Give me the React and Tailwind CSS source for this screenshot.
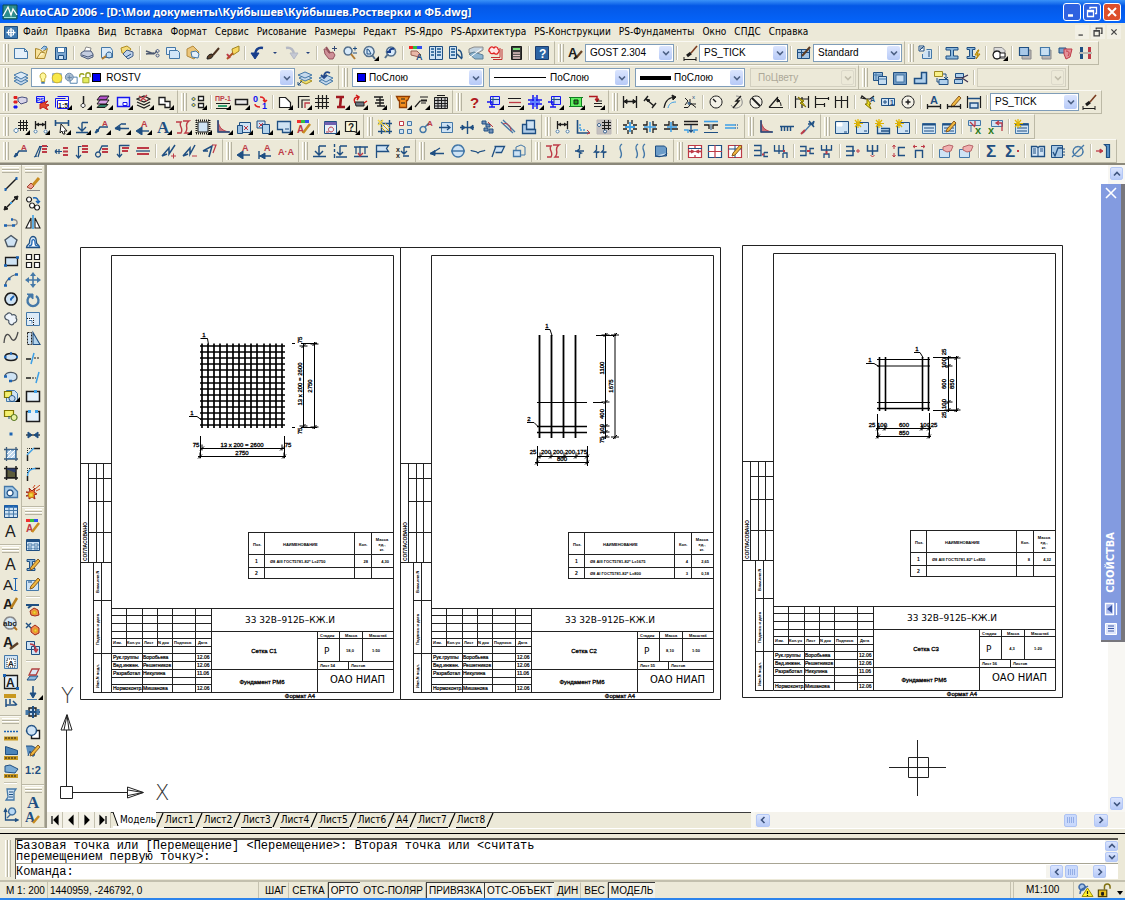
import { Fragment } from 'react'
import clsx from 'clsx'

const K = '#1c1c1c'
const N = '#1f4f82'
const S = '#4478a8'
const L = '#cfe3f4'
const R = '#bd3a46'
const Y = '#f3d545'
const G = '#8a8a8a'
const B = '#1414f0'
const E = '#3d9fe6'
const W = '#ffffff'

// text mark inside an icon
const T = (t, x, y, size, fill = K, bold = true, serif = false) => ({ t, x, y, size, fill, bold, serif })

const PENCIL = [['M6 10l7-8 2 2-7 8-3 1z', '#8a5a1c', '#f0b840']]
const STAR = [['M4 0v9M0 4.5h9M1 1l6 7M7 1L1 8', '#e0b400', 'none', 1.2]]
const TABLE = [['M1.5 4.5h13v10h-13z', S, L], ['M1.5 5.5h13', N, 'none', 2], ['M3 9h10M3 12h10', N, 'none', 1]]

// every mark is [path, stroke, fill, stroke width]
const ICONS = {
  new: [['M1.5 3.5h10l3 3v7h-13z', S, '#e4f0fb'], ['M11.5 3.5v3h3', S]],
  open: [['M2.5 13.5V3.5l4 1 3 2 5-3-3 10z', '#a8852c', '#f7e29a'], ['M4 13l4-6 4 1', '#a8852c', '#fff3c4'], ['M8 4l3-3 3 1-2 3', S, '#9cc4e8']],
  save: [['M2.5 2.5h11v12h-11z', N, '#7ba6d0'], ['M4.5 2.5h7v5h-7z', S, W], ['M5.5 10.5h5v4h-5z', N, L]],
  plot: [['M5 7L7 2l5 1-1 5', G, W], ['M2 8l3-2h7l2 3v3l-5 2-7-3z', '#4b5b7a', '#c4cde0'], ['M3 10l6 2 5-2', '#4b5b7a']],
  preview: [['M2.5 2.5h9l2 3v7h-11z', S, '#dcebf8'], ['M10 7a3 3 0 1 0 .1 0', N, '#bcdcf6'], ['M7 11l-4 3', '#b07a30', 'none', 2]],
  publish: [['M2 3l6-2 4 3-4 5-5-1z', '#b08c20', '#f4dc7a'], ['M4 9l4-4 6 2v4l-5 3z', '#3e5c88', '#bfd2ea'], ['M7 12l5-3', N]],
  cut: [['M1 6l8 3M1 9l8-1M9 9l3-3', '#4c5870', 'none', 1.4], ['M12.5 4.5a1.5 1.5 0 1 0 .1 0M12.5 9a1.5 1.5 0 1 0 .1 0', '#3c4f7c']],
  copy: [['M1.5 2.5h9v7h-9z', S, '#e4f0fb'], ['M4.5 5.5h8l2 2v6h-10z', S, '#d2e6f8']],
  paste: [['M2 4l6-3 6 6-5 7-7-3z', '#b48a3c', '#ecc67a'], ['M6 7l5-1 3 3-1 4-6-1z', S, '#e4f0fb']],
  brush: [['M2 14c0-3 2-5 5-5l1 1c0 3-3 4-6 4z', K, '#5c4028'], ['M8 10l6-7', '#4c3220', 'none', 2]],
  blockedit: [['M7 4l7-3v5l-6 4z', '#a08420', '#f8d860'], ['M2 14l6-6', '#b05420', 'none', 2], ['M2 9l3 4', R, 'none', 2]],
  undo: [['M13 3C8 2 5 5 5 10', '#183e8c', 'none', 2.4], ['M1 8l8 0-4 6z', '#183e8c', '#183e8c']],
  redo: [['M3 3c5-1 8 2 8 7', '#b4b8c4', 'none', 2.4], ['M7 8h8l-4 6z', '#b4b8c4', '#c4c8d4']],
  pan: [['M2 4l2 0 3 4 4-1 2 3-2 4-4 0-4-5z', '#94525c', '#cf9098'], ['M4 2l4 6', '#94525c', 'none', 2], ['M10 3.5h5M12.5 1v5', '#344a74']],
  zoomrt: [['M6 2a4 4 0 1 0 .1 0', '#54708c', '#d8eafa', 1.5], ['M9 9l4 5', '#b07a30', 'none', 2], ['M11 3.5h4M13 1.5v4M11 8h4', N]],
  zoomwin: [['M7 1.5a5 5 0 1 0 .1 0', '#54708c', '#d8eafa', 1.5], ['M5 4v5h4l-2-4z', N, L], ['M10 10l3 4', '#54708c', 'none', 2]],
  zoomprev: [['M9 2a4.5 4.5 0 1 0 .1 0', '#54708c', '#d8eafa', 1.5], ['M6 9l-3 4', '#54708c', 'none', 2], ['M12 4c-3-1-5 1-5 4M5 7h4', '#183e8c', 'none', 2]],
  props: [['M1 2.5h4', '#f02020', 'none', 3], ['M5 2.5h4', '#30c040', 'none', 3], ['M9 2.5h5', '#3050f0', 'none', 3], ['M3 6h6l4 4-2 2-4-1-4-1z', '#9a6050', '#e8b8a8'], T('A', 8, 15, 9, N)],
  center: [['M1.5 1.5h13v13h-13z', N, L], ['M7.5 2v12', N], ['M3 4h3M3 7h3M3 10h3M9 4h4M9 7h4M9 10h4', S, 'none', 2]],
  palettes: [['M1.5 1.5h7v12h-7z', N, L], ['M3 4h4M3 7h4M3 10h4', S, 'none', 2], ['M10 5c3 0 4 3 4 8M9 9l5 5', N, 'none', 1.5]],
  sheetset: [['M1 4l5-2h9v3l-5 3H1z', G, '#c4d4e0'], ['M1 9l5-2 9 3v4H7z', '#5c8098', '#8cb4d0'], ['M1 13l12-9', W]],
  markup: [['M2 3c1-2 3-1 4 0 1-2 4-1 4 1 2 1 1 3 0 4-1 2-3 1-4 0-1 1-4 1-4-1-2-1-1-3 0-4z', '#e02020', '#ffe4e4', 1.3], ['M3 12.5h9V3M5 14.5h9V4', '#c03030']],
  calc: [['M3.5 1.5h10v13h-10z', K, '#383838'], ['M5 4h7', '#78e078', 'none', 2], ['M5 8h7M5 10.5h7M5 13h7', '#e8c8c8', 'none', 1.4]],
  help: [['M1.5 1.5h13v13h-13z', '#1c3c6c', '#2c64a4'], T('?', 5, 13, 12, W)],
  textstyle: [T('A', 0, 12, 13), ['M8 13l6-7', '#6a4424', 'none', 2.2], ['M6 14l3-3', K, 'none', 2]],
  dimstyle: [['M2 14.5h12M2 12v4M14 12v4', K], ['M5 11l4-3', K, 'none', 3], ['M9 8l6-7', '#7a3c20', 'none', 1.6]],
  tblstyle: [['M1.5 4.5h12v9h-12z', N, '#a4c4e4'], ['M1.5 7.5h12M5.5 4.5v9', N], ['M6 11l8-9', '#5c3c24', 'none', 2]],
  cleanup: [['M1 1h5v5h-5z', N, W], ['M2 3h3M2 5l4-4', N], ['M8.5 4.5h5v9h-9V9', S, L], ['M10 7h2M10 9h2M10 11h2', N]],
  ibeam: [['M2 2.5h12v2.5H9.5v6H14v3H2v-3h4.5v-6H2z', N, '#8cb8dc']],
  ibeam2: [['M2 2.5h8v2H7.5v7H10v2H2v-2h2.5v-7H2z', N, '#8cb8dc'], ['M13 5l-3 5h3l-2 4 4-5h-3l2-4z', '#b08000', Y]],
  regen: [['M3 2.5h8l3 3v8H3z', G, '#dcdcdc'], ['M6 6a4 4 0 1 0 .1 0', K, W, 1.3], ['M9 8h5v4H9z', K, W]],
  front: [['M5 5h9v9H5z', G, '#b8b4b4', 1], ['M2.5 2.5h9v8h-9z', N, '#a8c8e8', 1.2]],
  back: [['M5 5h9v9H5z', G, '#b8b4b4', 1], ['M3.5 2.5h9v8h-9z', S, '#c8dff2', 1.2]],
  above: [['M1 3h7v5H1z', N, '#7ca4cc'], ['M6 4h8l-2 8-4 2-2-5z', R, '#e49098'], ['M8 6c3 0 4 2 2 5', R]],
  under: [['M3.5 2v5M3.5 9v5', N, 'none', 3], ['M11.5 2v5M11.5 9v5', R, 'none', 3], ['M1 8h13', G]],

  layers: [['M1 11l7-3 7 3-7 4z', S, '#c4d8ec'], ['M1 8l7-3 7 3-7 4z', S, '#c4d8ec'], ['M1 5l7-3 7 3-7 4z', S, '#dceaf6']],
  layercur: [['M3 11l6-3 6 3-6 3z', '#a89020', '#f0e070'], ['M2 8l6-3 7 3-7 3z', S, '#c4d8ec'], ['M1 5l7-3 7 3-7 3z', S, '#c4d8ec'], ['M1 15l4-4M1 12v3h3', N]],
  layerprev: [['M1 11l7-3 7 3-7 4z', S, '#c4d8ec'], ['M1 8l7-3 7 3-7 4z', S, '#c4d8ec'], ['M12 3c-4-2-6 0-6 4M3 5l3 3 3-3', '#23488a', 'none', 1.8]],
  vpj1: [['M1.5 2.5h9v8h-9z', N, '#9cc0e0'], ['M1.5 5h9M4 2.5v8', S], ['M6.5 6.5h8v8h-8z', N, '#c4dcf0'], ['M6.5 9h8', S]],
  vpj2: [['M1.5 2.5h13v12h-13z', N, '#7098c0'], ['M4 5h8v7H4z', S, '#c8def2']],
  vpj3: [['M8.5 2.5h5v11h-12v-5h7z', N, '#b0d0ec', 1.5]],
  vpj4: [['M1.5 1.5h8v5h-8z', '#9c8820', '#f8f088'], ['M6 9.5h9v5H6z', N, '#b0d0ec'], ['M10 4h3v4M11 7l2 2 2-2M4 8v4h2', N]],
  vpj5: [['M2.5 3.5h8v4h-8zM1.5 9.5h8v4h-8z', N, '#b0d0ec'], ['M9 8l6-3M9 8l6 4M2 8h8', '#3c3050', 'none', 1.2]],

  psprops: [['M1 2.5h3v2H1z', '#e02020', '#e02020'], ['M1 7h3v2H1z', '#e02020', '#e02020'], ['M1 12h3v2H1z', B, B], ['M5 4l4-1 5 1v4l-6 2-3-3z', '#4a5080', '#d8d4e8']],
  pswand: [['M2.5 2.5h8v6h-8z', B, '#d0d0f8'], T('PS', 2, 8, 6, B), ['M6 10l8-3-3 3 4 1-3 2 2 3-5-3-3 2z', '#c02020', '#e04830']],
  scale15: [['M1.5 4.5v9M1.5 4.5h10M3.5 2.5h11v4', B], ['M3.5 6.5h11v8h-11z', B, W], T('1:5', 4, 14, 7, K)],
  plumb: [['M8.5 2v8', K, 'none', 1.5], ['M8 9.5a2 2 0 1 0 .1 0', K, W]],
  layersp: [['M2 6l3-4h9l-3 4z', K, '#b050c8'], ['M2 10l3-4h9l-3 4z', K, '#d8a0e8'], ['M2 13.5l3-3h8l-3 3z', K, '#308068']],
  rectb: [['M1.5 3.5h12v9h-12z', B, '#e8ecff', 1.4], ['M7 8.5h4v3H7z', B, W]],
  layersx: [['M1 5l7-3 6 3-6 3zM1 8l7 3 6-3M1 11l7 3 6-3', K, 'none', 1.2], ['M3 2l8 5M11 1L4 7', R, 'none', 1.2]],
  step: [['M2 3.5h6v4h5v6H8v-3H2z', K, W, 1.3]],
  nodes: [['M3.5 3.5a1.5 1.5 0 1 0 .1 0M3.5 9.5a1.5 1.5 0 1 0 .1 0', N, Y], ['M8.5 2.5h5v4h-5zM8.5 9.5h5v4h-5z', K, W, 1.3]],
  pr1: [T('ПР-1', 0, 7, 7, R), ['M1 9.5h14M1 14.5h14', K], ['M3 12h9', '#30a070', 'none', 2]],
  beam: [['M1.5 5.5h12v5h-12z', K, '#e8e8e8', 1.5]],
  swap: [T('0', 1, 8, 9, B), T('1', 10, 15, 9, B), ['M8 3c4 0 5 2 5 5M11 6l2 2 2-2M8 13c-4 0-5-2-5-3', '#e02020', 'none', 1.4]],
  shape: [['M2.5 3.5h6l5 5v5h-11z', K, W, 1.2]],
  corner: [['M2.5 14V2.5h11M6 14V6h8', K, 'none', 1.2], ['M9 14V9h5', R, 'none', 1.3]],
  grid: [['M1 4.5h14M1 8.5h14M1 12.5h14M4.5 1v14M8.5 1v14M12.5 1v14', K, 'none', 1.2]],
  isec: [['M3 3h8M4 13h8M8 3L7 13', '#a01820', 'none', 2.6]],
  teapot: [['M3 8h9v4H4z', K, '#6c7480'], ['M3 9c-2-4 0-6 3-6M4 1L7 3 5 6M12 9l3-2', '#d01c1c', 'none', 1.5]],
  ladder: [['M3 3h9M5 6h8M4 9h9M6 12h8M9 3v9', K, 'none', 1.3]],
  cup: [['M1.5 2.5h13l-2 4h-1v7h-7v-7h-1z', '#903c00', '#f49020', 1.3], ['M6 5h4M6 9h4', K]],
  listl: [['M1 13l5-6h7M6 3h8M7 6h6M7 9h5', K, 'none', 1.2]],
  tbl: [['M1.5 3.5h13v11h-13z', K, '#c8c8c8'], ['M1 6.5h14M1 9.5h14M1 12h14M5 4v11M8.5 4v11M12 4v11M4 1.5h8', K]],
  ques: [T('?', 4, 14, 15, '#b01820')],
  dimwin: [['M4.5 2.5h9v8h-9z', B, '#d0dcf8'], ['M7 3v7M4.5 5.5h9', N], ['M1 8h5v5M3 13h6', B, 'none', 1.3]],
  lines: [['M1 4.5h13M1 12.5h13', K, 'none', 1.2], ['M2 8.5h12', R, 'none', 1.3]],
  bplus: [['M1 6h14M1 10h14M6 1v14M10 1v14', B, 'none', 1.5], ['M3 8h10M8 3v10', '#6080ff', 'none', 2]],
  green: [['M2.5 3.5h11v9h-11z', '#108020', '#60f060'], ['M1 3.5h14M1 12.5h14', '#108020'], ['M6 6h4v4H6z', K, '#18a018']],
  redlist: [['M1 2.5h8v4', '#b01820', 'none', 1.5], ['M7 5l2 3 2-3z', '#b01820', '#b01820'], ['M6 9.5h8M6 12.5h8M9 7h5', K]],
  dlin: [['M1.5 2v12M14.5 2v12M1.5 7.5h13', K, 'none', 1.3], ['M5 5.5l-3 2 3 2zM11 5.5l3 2-3 2z', K, K]],
  dalign: [['M4 5l8 7M2 7l4-5M10 14l4-5', K, 'none', 1.4], ['M4 5l4 1-2 2z', K, K]],
  darc: [['M2 14C3 7 7 3 14 3', K, 'none', 1.2], ['M6 14c1-4 3-6 8-6', E], ['M10 1l4 2-3 3z', K, K]],
  dord: [T('x', 10, 5, 6, N, false), ['M2 13.5h4l3-4 5 4M8 5v5h6M3 4l3 3-3 4', K], ['M7 8.5a1 1 0 1 0 .1 0', N]],
  drad: [['M8 2a6 6 0 1 0 .1 0', K, '#f4f2e8'], ['M8 8L5 5', K, 'none', 1.4]],
  djog: [['M8 2a6 6 0 1 1-5 9', G], ['M13 2L8 7h3l-6 7', K, 'none', 1.4]],
  ddia: [['M8 2a6 6 0 1 0 .1 0', K, '#f4f2e8'], ['M4 4l8 8', K, 'none', 1.8]],
  dang: [['M1 13.5h14M1 13.5L10 3', K, 'none', 1.2], ['M9 6c3 1 4 3 4 6', K], ['M9 4l3 3-3 1z', K, K]],
  dquick: [['M1.5 2v12M14.5 2v12M8 3v11M1.5 5h13', K, 'none', 1.2], ['M4 3l6 4-2 1 4 5-6-4 2-1z', '#807000', '#f0e020']],
  dbase: [['M1.5 2v12M1.5 4.5h13M1.5 10.5h9M14.5 3v3M10.5 9v4', K, 'none', 1.2]],
  dcont: [['M1.5 2v12M7.5 2v12M13.5 2v12M1.5 6.5h12', K, 'none', 1.2]],
  dlead: [['M1 4l5 1-4-3zM5 5h5l4-3', K, 'none', 1.2], T('A', 10, 8, 7, N), ['M7 5l4 5-2 0 2 5-6-5 2 0z', '#807000', '#f0e020']],
  tol: [['M1.5 4.5h13v7h-13z', N, L], ['M8.5 4v8M3 8h4M5 6v4', N], T('1', 10, 11, 7, N)],
  cmark: [['M8 2a6 6 0 1 0 .1 0', K, '#f4f2e8'], ['M5.5 8h5M8 5.5v5', K, 'none', 1.4]],
  dimed: [T('A', 4, 10, 11, N), ['M1.5 10v5M14.5 10v5M1.5 12.5h13', K, 'none', 1.3]],
  dimted: [...PENCIL, ['M1.5 10v5M14.5 10v5M1.5 12.5h13', K, 'none', 1.3]],
  dimup: [['M1.5 2v12M14.5 2v12', K, 'none', 1.2], ['M2 4.5h12M4 9h8v5H4z', N, L, 1.4]],

  gridc: [['M5 3.5h10M5 6.5h10M5 9.5h10M7.5 1v11M10.5 1v11M13.5 1v11', K], ['M3 9.5a2 2 0 1 0 .1 0', S, W]],
  dimc: [['M2.5 2v8M12.5 2v8M3 5.5h9', K, 'none', 1.3], ['M3 5.5l3-2v4zM12 5.5l-3-2v4z', K, K, 0], ['M2.5 11a1.5 1.5 0 1 0 .1 0M12.5 11a1.5 1.5 0 1 0 .1 0', S, W]],
  dimcur: [['M1.5 1v6M14.5 1v6M1.5 4h13', N, 'none', 1.6], ['M7 5l6 7-3 0 1 3-2 0-1-3-2 2z', K, W]],
  level: [['M8 3.5h6M8 3.5v8M4 8l4 4 4-4M2 13.5h12', N, 'none', 1.4]],
  leada: [['M2 14l4-6h8', N, 'none', 1.4], ['M1 14l2-4 2 2z', N, N], T('A', 8, 7, 8, R)],
  leadl: [['M1 9.5h14M1 9.5l7-5M8 5l4 0', N, 'none', 1.4], ['M1 9.5l5-2v4z', N, N]],
  leadb: [['M2 12h12', N, 'none', 1.4], ['M1 12l6-4v8z', N, N], T('A', 6, 8, 9, R)],
  biga: [T('A', 2, 14, 17, N, true, true)],
  rbreak: [['M1 3h5c-3 4 3 6 0 11H2M8 2h6c-6 4 1 7-4 12h4', R, 'none', 1.4]],
  hsq: [['M3 3h10v10H3z', K, L, 1], ['M1.5 1v14M14.5 1v14M1 1.5h14M1 14.5h14', K, 'none', 2, '1 1']],
  rtri: [['M3 2v11h11C8 12 4 9 3 2z', R, '#c87078'], ['M3 1v12h12', N, 'none', 1.5]],
  win1: [['M3.5 3.5h11v10h-11z', N, L], ['M1.5 6.5h5v8h-5z', N, '#9cc0e0'], ['M8 7l4 4M12 7l-4 4', R]],
  win2: [['M1 2h8v7H1z', N, L], ['M3 4l4 4M7 4L3 8', R], ['M6.5 5.5h7v9h-7z', N, '#b4d4ec']],
  sview: [['M1.5 2.5h13v11h-8v-3h-5z', N, L, 1.3], ['M9 10h4', N]],
  painta: [['M1 2.5h4', '#f03030', 'none', 3], ['M5 2.5h4', '#30c040', 'none', 3], ['M9 2.5h4', '#3050f0', 'none', 3], T('A', 1, 14, 10, R), ['M7 14l7-9', '#c88c20', 'none', 2.5]],
  form: [['M1.5 2.5h12v12h-12z', N, '#e8f0f8'], ['M1.5 4.5h12', '#7060b0', 'none', 3], ['M8 8a2.5 2.5 0 1 0 .1 0M3 13h3', R]],
  hdoc: [['M2.5 2.5h11v11l-2-1H2.5z', K, '#f8f4d8', 1.2], T('?', 5, 12, 10, K)],
  hatchb: [['M4.5 1v14M12.5 1v14M1 4.5h14M1 12.5h14', N, 'none', 1.4], ['M5 5l7 7M8 4l5 5M4 8l5 5', '#c8a410'], ['M1 1l5 5M6 1L1 6', Y, 'none', 1.5]],
  foursq: [['M1.5 2.5h4v4h-4z', R, W], ['M9.5 2.5h4v4h-4zM1.5 10.5h4v4h-4zM9.5 10.5h4v4h-4z', S, L]],
  circa: [['M5 7.5a3 3 0 1 0 .1 0M7 8l4-4', S, 'none', 1.5], T('A', 9, 7, 8, R)],
  boxarr: [['M2.5 3.5h11v10h-11z', S, L], ['M0 8.5h10M8 6l3 2.5L8 11', N, 'none', 1.3]],
  crossb: [['M1 8.5h14M8.5 2v13', N, 'none', 1.4], ['M3 6l3 2.5L3 11zM14 6l-3 2.5 3 2.5z', N, N]],
  dotsd: [['M2 2h4v3H2zM6 5h4v3H6zM4 9h4v3H4zM9 10h4v4H9z', N, '#7090b8'], ['M8 3l5 5', R]],
  hdiag: [['M1 3l12 11M3 1l12 12', S, 'none', 1.3], ['M3 5c4-2 8 2 8 7', R]],
  sheets: [['M5.5 1.5h8v9h-8z', N, L, 1.3], ['M1.5 5.5h4v5h9v4h-13z', N, '#b0cce8', 1.3]],
  axes: [['M2.5 1v13h12', N, 'none', 1.6], ['M5 5v6h6', E, 'none', 1.4, '2 1'], ['M12 11l3 3-3 1', R]],
  gridg: [['M1 1h14v14H1z', '#bcb8b8', '#c4c0c0'], ['M6 3.5h9M6 6.5h9M8.5 1v10M12.5 1v10M6 9.5h9', K], ['M3 4.5a1.5 1.5 0 1 0 .1 0M9 11a1.5 1.5 0 1 0 .1 0', N, W]],
  cr1: [['M1 6h4M1 10h4M11 6h4M11 10h4M6 1v4M10 1v4M6 11v4M10 11v4', K, 'none', 1.3], ['M3 8h10M8 3v10', E, 'none', 1.8]],
  cr2: [['M1 6h4V2M11 2v4h4M1 10h4v4M11 14v-4h4', K, 'none', 1.3], ['M2 8h12M8 3v10', E, 'none', 1.5]],
  cr3: [['M1 6h5V2M10 2v4h5M1 10h14', K, 'none', 1.3], ['M4 8h10M8 3v10', E, 'none', 1.5]],
  tee1: [['M1 2.5h14M1 5.5h14', K, 'none', 1.3], ['M8 6v7M6 11l2 2 2-2', N, 'none', 1.3], ['M1 11h4v3M15 11h-4v3', E, 'none', 1.4]],
  tee2: [['M1 2.5h14', E, 'none', 1.6], ['M1 6h5v4M15 6h-5v4', K, 'none', 1.3], ['M8 5v6M1 13.5h14', N]],
  tee3: [['M1 6h10M1 9h10', E, 'none', 1.6], ['M11 6h4M11 9h4', S, 'none', 1.4, '1 1']],
  ruler: [['M1 7.5h14M2.5 8v4M5.5 8v4M8.5 8v4M11.5 8v4', N, 'none', 1.5]],
  redarr: [['M3 14L13 3', S, 'none', 1.3], ['M8 5l5 0 1-3M9 2l5 6', N, 'none', 1.6], ['M1 15l4-4', R, 'none', 2]],
  vp: [['M1.5 2.5h13v12h-13z', N, L], ['M3 4h5v3H3z', W, W], ['M10 13h3', N]],
  vps: [['M2.5 3.5h12v11h-12z', N, L], ...STAR, ['M10 12h3', N]],
  vpt: [['M2.5 4v10.5h12V9M6 9.5h9M6 12h9', N, L, 1.3], ...STAR],
  xtab: TABLE,
  xtabp: [...TABLE, ...PENCIL],
  xtabs: [...TABLE, ...STAR],
  xlsin: [['M1.5 1.5h12v5h-12zM4 7v6', S, L], ['M8 2v5M3 3l5 5', R, 'none', 1.3], T('x', 8, 15, 11, '#2c7c20')],
  xlsout: [['M3.5 1.5h11v6h-11z', S, L], ['M14 12V4H9M11 2L8 4l3 2', R, 'none', 1.3], T('x', 0, 15, 11, '#2c7c20')],

  m1: [['M2 14l5-11M1 14l3-1M5 14l3-10M6 3.5h9', N, 'none', 1.2], ['M9 3h5M9 6h5M9 9h5', R, 'none', 1.8]],
  m2: [['M1 8.5h7M1 8.5l2-2M1 8.5l2 2M5 6v5', N, 'none', 1.2], ['M9 5h5M9 8.5h5M9 12h5', R, 'none', 2]],
  m3: [['M4.5 14V3.5h3M2 12l2.5 3L7 12', N, 'none', 1.2], ['M8 3h6M8 6h6M8 9h6', R, 'none', 2]],
  m4: [['M4 9a2.5 2.5 0 1 0 .1 0M5 9l3-6h6', N, 'none', 1.3], ['M8 6h6M8 9h6', R, 'none', 2]],
  m5: [['M4.5 2v12M2 11l2.5 3L7 11M4.5 2.5h10', N, 'none', 1.3], ['M7 5h7M7 8h6', R, 'none', 1.8]],
  m6: [['M2 5h12M2 11h12', R, 'none', 2], ['M1 8h14', N, 'none', 1.3]],
  a1: [['M1 13l7-8v6l6-9M1 13l5-2', N, 'none', 1.5], ['M10 13h5M12.5 10.5v5', R]],
  a2: [['M1 13l7-8v6l5-9M1 13l5-2', N, 'none', 1.5], ['M10 13h5', R]],
  a3: [['M1 8l9-5-3 11M1 8l5 0', N, 'none', 1.5], ['M10 2h4l-3 8', R, 'none', 1.2]],
  abar: [['M2 13h12M2 8v8', N, 'none', 1.4], ['M3 13l5-3v6z', N, N], T('A', 7, 8, 9, R)],
  adota: [T('A·A', 0, 12, 9, R)],
  lv1: [['M1 13.5h13M7 3h7M7 3v9M3 8l4 4 4-4', N, 'none', 1.5]],
  lv2: [['M1.5 1v3M1.5 6v3M1.5 11v4M3 14h11M7 3h7M7 3v9M4 9l3 3 3-3', N, 'none', 1.4]],
  lv3: [['M1 4h14M3 4v7M12 4v7M1 13.5h14M7 3v9', N, 'none', 1.3], ['M5 10l2 3 3-3', R, 'none', 1.4]],
  flag: [['M2.5 15V2.5h12l-2 3 2 3h-12', N, L, 1.3]],
  xdim: [T('x', 1, 9, 7, K), T('x', 1, 15, 7, K), ['M8 13h6M9 4h6M9 4v7M6 8l3 3 3-3', N, 'none', 1.4]],
  lead2: [['M1 10.5h14M3 10l8-5', N, 'none', 1.3], ['M1 10.5l5-3v5z', N, N]],
  circm: [['M8 2a6 6 0 1 0 .1 0M1 8h14', S, L, 1.4]],
  brace: [['M1 7c0 2 5 0 7 3 2-3 6-1 7-3', N, 'none', 1.3]],
  para: [['M4.5 3.5h10l-3 6h-6M6 3L2 14', N, L, 1.3]],
  cube: [['M5 4l5-2 4 2v8h-4M5 4v4', S], ['M2.5 7.5h7v6h-7z', S, L, 1.3]],
  s1: [['M8.5 2v4l-3 2 5 2-2 1v4M4 8h9', N, 'none', 1.3]],
  s2: [['M4.5 2v5l-2 2h5l-3 1v5M11.5 2v5l-2 2h5l-3 1v5', N, 'none', 1.3]],
  s3: [['M10 1c-6 4 3 9-2 14', S, 'none', 1.4]],
  s4: [['M6 1c-6 4 3 9-2 14M13 1c-6 4 3 9-2 14', S, 'none', 1.4]],
  book3: [['M2.5 3h9l2 2v8h-11z', N, '#6c9cc8'], ['M2 13c5 1 10 0 12-3', N, L, 1.3]],
  rt1: [['M1.5 2.5h13v12h-13z', R, W, 1.2], ['M1 8.5h5M10 8.5h5M8 2v3M8 12v3M4 7l3 1.5L4 10M12 7L9 8.5 12 10', R, 'none', 1.3], ['M1 5.5h14', N]],
  rt2: [['M1.5 2.5h13v12h-13z', N, W, 1.2], ['M1 8.5h14M8 2v13', R, 'none', 1.2]],
  rt3: [['M1.5 2.5h13v12h-13z', R, W, 1.2], ['M1.5 6h13M8 2v13', N], ...PENCIL],
  c1: [['M1 2.5h7v10H1M1 7.5h7M11 9.5h4M11 9.5v4h4', N, 'none', 1.3], ['M9 11.5h2', R, 'none', 2]],
  c2: [['M1.5 2v6h9V2M6 2v9M10 10h4v5M10 10v5', N, 'none', 1.3], ['M11 7v2', R, 'none', 2]],
  c3: [['M1 3.5h6v9H1M1 8h6M15 5.5h-4v5h4', N, 'none', 1.3], ['M8 8h3', R, 'none', 2]],
  c4: [['M2.5 2v5h10V2M7.5 2v7M5 15v-4h5v4', N, 'none', 1.3], ['M7.5 8v3', R, 'none', 2]],
  c5: [['M1 3.5h7v9H1M1 8h9', N, 'none', 1.5], ['M11 8h4M13 6v4', R]],
  c6: [['M2.5 2v6h10V2M7.5 2v10', N, 'none', 1.5], ['M5.5 12l2 2 2-2', R]],
  c7: [['M14 4.5H7.5v8H14', N, 'none', 1.4], ['M3 2v4M3 10v4M1.5 4L3 2l1.5 2M1.5 12L3 14l1.5-2', R]],
  c8: [['M4.5 15V7.5h7V15', N, 'none', 1.4], ['M2 3.5h4M10 3.5h4M4 2L2 3.5 4 5M12 2l2 1.5L12 5', R]],
  hand: [['M1.5 6.5h10v8h-10z', S, L], ['M5 4l6-2 4 1-2 5-4 1-4-2z', '#b86468', '#f0b0b0']],
  sum: [T('Σ', 2, 14, 17, N)],
  sumd: [T('Σ', 1, 14, 17, N), ['M13 8h2', R, 'none', 2]],
  book: [['M1.5 3.5h5l1.5 1 1.5-1h5v10h-13z', N, '#d4e6f6', 1.3], ['M8 4v10M3 6h3M3 8h3M3 10h3M10 6h3M10 8h3', N]],
  fx: [['M1.5 2.5h11v12h-11z', N, '#a8c8e4'], ['M3 9l2 4 3-8h5', N, 'none', 1.3], ['M13 6h2M13 9h2M13 12h2', N]],
  dia: [['M8 3.5a5 5 0 1 0 .1 0M2 14L14 2', S, 'none', 1.3]],
  exit: [['M8.5 1.5h5v13l-3 0v-11z', N, '#5c98cc', 1.2], ['M0 8h6', R, 'none', 1.3], ['M4 6v4l3-2z', R, R]],

  line: [['M2.5 13.5l11-11', K, 'none', 1.4], ['M1.5 13.5h2M12.5 2.5h2', '#1c64b4', 'none', 3]],
  xline: [['M2 14L14 2', K, 'none', 1.5], ['M1 15l1-4 3 3zM15 1l-4 1 3 3z', K, K], ['M7 8h2', E, 'none', 2]],
  pline: [['M2 11.5h8c6 0 5-6 0-6', G, 'none', 1.4], ['M1 11.5h3M9 11.5h3M8 5.5h2', '#1c64b4', 'none', 2.5]],
  polygon: [['M8 2.5l6 4.5-2.5 6.5h-7L2 7z', '#4a5662', L, 1.4]],
  rect: [['M2.5 4.5h12v8h-12z', K, L, 1.3], ['M1 12.5h3M13 4.5h3', '#1c64b4', 'none', 2.5]],
  arc: [['M2 14C3 7 7 4 14 2', '#55606c', 'none', 1.3], ['M1 13.5h3M5 7h2.5M12 2.5h3', '#1c64b4', 'none', 2.5]],
  circle: [['M8 2a6 6 0 1 0 .1 0', K, L, 1.5], ['M8 8l3-3M7 8.5h2', '#1c64b4', 'none', 1.8]],
  cloud: [['M4 3c2-2 4-1 5 1 3-1 5 1 4 3 2 2 0 5-2 5-1 3-4 2-5 0-1-1 1-2-1-3-3 0-5-4-1-6z', '#4a5662', '#eef4fa', 1.2]],
  spline: [['M1 13c1-12 5-9 7-5s5 3 7-6', '#4a4a4a', 'none', 1.3]],
  ellipse: [['M8 4.5c8 0 8 7 0 7s-8-7 0-7', K, L, 1.5], ['M1 8h2.5M13 8h2M7 4.5h2', '#1c64b4', 'none', 2.5]],
  earc: [['M2 8c0-5 12-5 12 1 0 3-3 4-6 4', '#4a5662', L, 1.3], ['M1 8.5h3M6 13h3', '#1c64b4', 'none', 2.5]],
  insert: [['M3.5 2.5h8l3 3v8h-11z', S, L], ['M1.5 3.5h7v6h-7z', '#807400', '#f4f070', 1.2], ['M9 7.5a3 3 0 1 0 .1 0', N, '#c4daee']],
  block: [['M1.5 3.5h9v6h-9z', '#807400', '#f4f070', 1.2], ['M11 7.5a3 3 0 1 0 .1 0', '#587820', '#e8f0a0', 1.2], ['M6 9v3', N]],
  point: [['M6.5 8h3', '#1c64b4', 'none', 3]],
  hatch: [['M3.5 1v14M13 1v14M1 3.5h14M1 13h14', '#3c5a78', 'none', 1.3], ['M4 4h8.5v8.5H4z', S, '#c4daee'], ['M4 8l4-4M4 12l8-8M8 12l4-4', W]],
  grad: [['M3.5 1v14M13 1v14M1 3.5h14M1 13h14', K, 'none', 1.5], ['M4 4h8.5v8.5H4z', K, '#5c5c3c'], ['M4 4h8v3z', '#2c3c6c', '#2c3c6c']],
  region: [['M1.5 2.5h8l5 5v6h-13z', S, '#a8cce8', 1.3], ['M7 6a3 3 0 1 0 .1 0', N, W, 1.3]],
  table: [['M1.5 2.5h13v12h-13z', N, L], ['M1.5 3.5h13', '#1c64b4', 'none', 2.5], ['M1.5 7.5h13M1.5 11h13M6 3v11M10.5 3v11', S]],
  mtext: [T('A', 2, 14, 16, K, false)],
  stext: [T('A', 0, 14, 15, K, false), ['M12.5 3v11M10.5 2.5h4M10.5 14.5h4', '#1c64b4']],
  etext: [T('A', 0, 14, 14, K, true), ['M8 13l6-10', '#b88020', 'none', 2.5]],
  ftext: [['M7 2a6 6 0 1 0 .1 0', G, '#d4e8f8', 1.5], T('abc', 0, 11, 8, K), ['M11 12l3 3', '#b07020', 'none', 2]],
  ttext: [T('A', 0, 12, 14, K, true), ['M7 14l8-6', '#5c4028', 'none', 2.5]],
  sctext: [['M1.5 1.5h13v13h-13z', S, L], ['M4 5h8v8H4z', K, W, 1, '1 1'], T('A', 5, 12, 8)],
  jtext: [['M1.5 1.5h13v13h-13z', K, '#e4f0fa', 1.3], T('A', 3, 13, 12), ['M0 1.5h3M13 14.5h3', '#1c64b4', 'none', 3]],
  sptext: [['M1 3h12', '#c89820', 'none', 4], ['M3 14V6M3 12h10M10 8l4 4M7 6v5', N, 'none', 1.5]],
  dist: [['M1 5.5h14', '#1c64b4', 'none', 1.5, '2 1'], ['M1 12.5h14', '#c89820', 'none', 4], ['M3 11v2M6 11v2M9 11v2M12 11v2', K]],
  area: [['M2.5 9.5V1.5l12 4v4z', N, '#4c84b8'], ['M1 13h14', '#c89820', 'none', 4], ['M3 12v2M6 12v2M9 12v2M12 12v2', K]],
  mass: [['M2 9V3l5-1 8 4-3 4z', N, '#7cacd4'], ['M1 13h14', '#c89820', 'none', 4], ['M3 12v2M6 12v2M9 12v2M12 12v2', K]],
  list: [['M4 2h9l-2 3v8H3l2-3z', S, L, 1.3], ['M6 5h4M6 7.5h4M6 10h4', N]],
  locate: [['M2.5 4v10h12M1 6l1.5-3L4 6M12 12.5l3 1.5-3 1.5', N, 'none', 1.3], ['M9 2a3.5 3.5 0 1 0 .1 0M7 9l-3 3', '#3c6c9c', '#b8d8f4', 1.4]],

  erase: [['M2 14.5h13', G], ['M2 11l4-4 3 3-3 3z', '#a04030', '#f0a090'], ['M8 9l6-7', '#c88c20', 'none', 3]],
  copyo: [['M4 2a2.5 2.5 0 1 0 .1 0M7 8a2.5 2.5 0 1 0 .1 0M12 10a2.5 2.5 0 1 0 .1 0', K, W, 1.2], ['M8 3c4-1 6 2 5 5M11 6l2 2 2-2', '#1c64b4', 'none', 1.5]],
  mirror: [['M6 4v10H1zM10 4v10h5z', K, W, 1.1], ['M8 1v14', E, 'none', 1.6]],
  offset: [['M1.5 13.5c0-3 3-3 3-5 0-8 7-8 7 0 0 2 3 2 3 5z', N, L, 1.3], ['M4 12c3 0 3-2 3-5 0-2 3-2 3 1 0 3 0 4 4 4', '#1c64b4', W, 1.3]],
  array: [['M1.5 1.5h5v5h-5zM9.5 1.5h5v5h-5zM1.5 9.5h5v5h-5zM9.5 9.5h5v5h-5z', K, W, 1.2]],
  move: [['M8 2v12M2 8h12', S, 'none', 1.6], ['M8 0l3 4H5zM8 16l3-4H5zM0 8l4-3v6zM16 8l-4-3v6z', S, S, 0]],
  rotate: [['M11 4a5.5 5.5 0 1 1-6 0', S, 'none', 2.3], ['M2 2h6v5z', S, S]],
  scale: [['M1.5 1.5h13v13h-13z', S, '#dceaf6'], ['M2 7.5h6.5v7', K, W, 1, '1 1'], ['M4 9.5h3v3', S, 'none', 1]],
  stretch: [['M2.5 2.5h4v12h-4z', K, L, 1, '2 1'], ['M8 2.5v12h7z', N, '#b4d4ec', 1.1]],
  trim: [['M1 9h5', K, 'none', 1.5], ['M9 3L6 14', E, 'none', 1.5], ['M9 8h6', K, 'none', 1.2, '2 1']],
  extend: [['M1 9h5', K, 'none', 1.5], ['M7 9h4', K, 'none', 1.2, '2 1'], ['M14 3l-3 11', E, 'none', 1.5]],
  brkp: [['M1.5 3.5h13v10h-13z', K, '#e4f0fa', 1.5], ['M9 3.5h3', E, 'none', 3]],
  brk: [['M4 3.5H1.5v10h13v-10H12', K, '#e4f0fa', 1.5], ['M3 3.5h3M10 3.5h3', E, 'none', 3]],
  join: [['M1 8h14', K, 'none', 1.2], ['M3 5l4 3-4 3zM13 5L9 8l4 3z', N, '#1c4c7c']],
  chamfer: [['M2.5 15v-6M9 2.5h6', K, 'none', 1.5], ['M2 9l7-7', E, 'none', 1.5], ['M2.5 7V2.5H8', K, 'none', 1, '1 1']],
  fillet: [['M2.5 15v-5M10 2.5h5', K, 'none', 1.5], ['M2.5 10c0-5 3-7.5 8-7.5', E, 'none', 1.5], ['M2.5 7V2.5H8', K, 'none', 1, '1 1']],
  explode: [['M5 9l-4-2 4 0-1-4 3 3 3-3-1 4 3 2-3 1 1 4-3-2-3 2 0-3-3 0z', '#a02818', '#f47830'], ['M10 4l5-4M11 6l4-2M8 3l2-3', '#c84820'], ['M4 8h4v4H4z', '#d8a810', Y]],
  dcwin: [['M1.5 2.5h13v11h-13z', N, L], ['M2 4h12', N, 'none', 2], ['M3 7h4v2H3zM9 7h4v2H9zM3 11h4v1H3zM9 11h4v1H9z', S, W]],
  ibp: [['M2 2.5h8v2H7.5v7H10v2H2v-2h2.5v-7H2z', N, '#8cb8dc'], ...PENCIL],
  vpp: [['M1.5 4.5h12v10h-12z', S, L], ['M3 6h4', N], ...PENCIL],
  ex1: [['M1 3h13M3 6l4-3', N, 'none', 2], ['M5 9l4-3 4 2 1 5-4 1-4-1z', '#a02818', '#f4904c'], ['M8 9h3v3H8z', '#d8a810', Y]],
  ex2: [['M1 2l5 5M6 2L1 7', N, 'none', 1.4], ['M6 7l4-3 4 3 0 5-4 2-4-3z', '#a02818', '#f4904c'], ['M9 8h3v3H9z', '#d8a810', Y]],
  ex3: [['M1.5 1.5h8v8h-8zM6.5 6.5h8v8h-8z', N, L], ['M5 4c5 0 6 3 6 7M9 9l2 3 2-3', R, 'none', 1.5]],
  slab: [['M2 14l3-4h8l-3 4z', N, '#8cb8dc'], ['M4 9l3-6h7l-3 6z', '#b04040', '#dce8f4', 1.3]],
  down: [['M8 1v11', N, 'none', 1.6], ['M5 8l3 5 3-5z', N, N], ['M2 14.5h10', S]],
  globe: [['M4 4h7v8H4z', K, '#c4daee', 1.4], ['M1 8h14M8 2v12', N, 'none', 2], ['M2 6v5M13 5v6', S, 'none', 3]],
  circsq: [['M6.5 6.5h8v8h-8z', K, W, 1.4], ['M6.5 1.5a5 5 0 1 0 .1 0', N, L, 1.3]],
  mpen: [['M1 3h6l4 2-2 8H7L5 8l-2 5', N, '#5c90c0'], ...PENCIL],
  r12: [T('1:2', 0, 12, 11, N)],
  apen: [T('A', 0, 13, 14, N, true, true), ['M8 14l6-7', '#c88c20', 'none', 2.5]],

  bulb: [['M8 2a4 4 0 0 0-2 7v3h4V9a4 4 0 0 0-2-7z', '#b8a020', '#fff89c'], ['M6 13.5h4', S, 'none', 2]],
  sun: [['M3 3h10v10H3z', '#7ca0c8', '#a8c8e8'], ['M8 2.5a5.5 5.5 0 1 0 .1 0', '#c8a820', '#f8e848']],
  sunvp: [['M7 7h8v7H7z', S, W], ['M6 2.5a4.5 4.5 0 1 0 .1 0', '#6080a4', '#a8bcd0'], ['M6 5v5M4 7.5h5', '#6080a4']],
  lock: [['M9 7V4.5a2.5 2.5 0 0 1 5 0V7M2 7V4.5a3 3 0 0 1 5 0', '#98a020', 'none', 1.5], ['M5.5 7.5h7v6h-7z', '#98a020', '#e4ec60']],
  padlock: [['M9 7V4a3 3 0 0 1 6 0v2', '#807010', 'none', 1.6], ['M2.5 7.5h9v7h-9z', '#504000', '#e8c020', 1.2], ['M6 10h2v3H6z', K, K]],
  trusted: [['M4 2a3 3 0 1 0 .1 0M2 12c0-6 4-5 8-8', '#3c68a8', '#a8c4e8', 1.5], ['M9.5 6l5.5 8.5H4z', '#a09000', '#fff030'], ['M9.5 9v3M9.5 13v1', K, 'none', 1.2]],
  acad: [['M1 1h14v14H1z', '#0c4c50', '#2c8c8c'], ['M1 12l5-9 3 8 2-6 4 6', W, 'none', 1.3], ['M2 13.5h12', '#9ce0d8']],
  doc: [['M1.5 2.5h13v12h-13z', N, '#3c78b0'], ['M8 4v9M3.5 8.5h9', W, 'none', 1.3], ['M5.5 6h5v5h-5z', W]],
}

function Icon({ name, className = 'size-4' }) {
  return (
    <svg viewBox="0 0 16 16" className={clsx('shrink-0', className)} aria-hidden="true">
      {(ICONS[name] || []).map((m, i) =>
        m.t ? (
          <text key={i} x={m.x} y={m.y} fontSize={m.size} fill={m.fill} fontWeight={m.bold ? 700 : 400} fontFamily={m.serif ? 'Liberation Serif, serif' : 'Liberation Sans, sans-serif'}>{m.t}</text>
        ) : (
          <path key={i} d={m[0]} stroke={m[1]} fill={m[2] || 'none'} strokeWidth={m[3] ?? 1} strokeDasharray={m[4]} />
        )
      )}
    </svg>
  )
}

// "|" is a separator, "." a small drop arrow, a trailing ">" marks a flyout
function Tools({ list, vertical }) {
  return list.split(' ').map((item, i) => {
    if (item === '|') {
      return <span key={i} className={clsx('shrink-0', vertical ? 'mx-1 my-[2px] h-[2px] border-t border-[#c5c2b0] border-b border-b-white' : 'mx-[2px] my-1 w-[2px] border-l border-[#c5c2b0] border-r border-r-white')} />
    }
    if (item === '.') {
      return (
        <button key={i} aria-label="history" className="grid w-[13px] shrink-0 place-items-center">
          <span className="border-x-2 border-t-2 border-x-transparent border-t-[#23407c]" />
        </button>
      )
    }
    const name = item.replace('>', '')
    return (
      <button key={i} aria-label={name} className={clsx('relative grid min-h-0 min-w-0 flex-1 place-items-center', vertical ? 'w-full' : 'h-full')}>
        <Icon name={name} />
        {item.endsWith('>') && (
          <svg viewBox="0 0 4 4" className="absolute right-px bottom-[3px] size-[5px]"><path d="M4 0v4H0z" fill="#000" /></svg>
        )}
      </button>
    )
  })
}

function Bar({ children, className }) {
  return (
    <div role="toolbar" className={clsx('flex shrink-0 items-stretch border-r border-b border-[#bcb9a6] border-t border-t-[#faf9f3] pr-[2px]', className)}>
      <span className="my-[2px] mr-[2px] ml-[3px] flex shrink-0">
        <i className="w-[3px] border-r border-l border-l-white border-r-[#b5b2a0]" />
        <i className="w-[3px] border-r border-l border-l-white border-r-[#b5b2a0]" />
      </span>
      {children}
    </div>
  )
}

function VBar({ list, className }) {
  return (
    <div role="toolbar" className={clsx('flex flex-col items-center border-b border-[#bcb9a6] border-t border-t-[#faf9f3] pb-1', className)}>
      <span className="my-px flex shrink-0 flex-col">
        <i className="h-[3px] w-[17px] border-t border-b border-t-white border-b-[#b5b2a0]" />
        <i className="h-[3px] w-[17px] border-t border-b border-t-white border-b-[#b5b2a0]" />
      </span>
      <div className="flex w-full min-h-0 flex-1 flex-col"><Tools list={list} vertical /></div>
    </div>
  )
}

function Chevron({ dir = 'down', className }) {
  const d = { down: 'M1 2.5l3 3 3-3', up: 'M1 5.5l3-3 3 3', left: 'M5.5 1l-3 3 3 3', right: 'M2.5 1l3 3-3 3' }[dir]
  return <svg viewBox="0 0 8 8" className={clsx('size-2', className)}><path d={d} fill="none" stroke="currentColor" strokeWidth="1.6" /></svg>
}

function Combo({ label, value, disabled, className, pad = 'pl-1', children }) {
  return (
    <div className={clsx('relative my-[2px] flex shrink-0 border', disabled ? 'border-[#d2cfbf] bg-[#ece9d8]' : 'border-[#7f9db9] bg-white', className)}>
      <span className="pointer-events-none absolute inset-y-0 left-1 flex items-center">{children}</span>
      <select aria-label={label} disabled={disabled} className={clsx('w-full appearance-none bg-transparent text-[10px] leading-4 opacity-100 outline-none', disabled ? 'text-[#aca899]' : 'text-black', pad)}>
        <option>{value}</option>
      </select>
      <span className={clsx('pointer-events-none absolute inset-y-[1px] right-[1px] grid w-[13px] place-items-center rounded-[2px]', disabled ? 'border border-[#dcd9ca] text-[#c0bdab]' : 'bg-linear-to-b from-[#dbe5fe] to-[#b7caf7] text-[#4d6185]')}>
        <Chevron />
      </span>
    </div>
  )
}

function ScrollButton({ dir, className }) {
  return (
    <button aria-label={`scroll ${dir}`} className={clsx('grid shrink-0 place-items-center rounded-[2px] border border-[#b4c8f6] bg-linear-to-b from-[#dbe5fe] to-[#b7caf7] text-[#3f557f]', className)}>
      <Chevron dir={dir} />
    </button>
  )
}

const Thumb = () => (
  <span className="flex h-[13px] w-[13px] items-center justify-center gap-px rounded-[2px] border border-[#aec3f3] bg-[#c9d9fc]">
    {[0, 1, 2, 3].map(i => <i key={i} className="h-[6px] w-px bg-[#94aee6]" />)}
  </span>
)

const MENU = ['Файл', 'Правка', 'Вид', 'Вставка', 'Формат', 'Сервис', 'Рисование', 'Размеры', 'Редакт', 'PS-Ядро', 'PS-Архитектура', 'PS-Конструкции', 'PS-Фундаменты', 'Окно', 'СПДС', 'Справка']

function TitleBar() {
  const btn = 'grid h-[18px] w-[18px] place-items-center rounded-[3px] border border-white'
  return (
    <header className="flex h-[23px] shrink-0 items-center bg-linear-to-b from-[#3a92f8] via-[#0458e6] via-25% to-[#0464fa] pr-1 pl-[2px]">
      <Icon name="acad" />
      <h1 className="ml-[2px] flex-1 truncate font-['Noto_Sans',sans-serif] text-[11px] leading-5 font-bold text-white [text-shadow:1px_1px_#0a3ca0]">AutoCAD 2006 - [D:\Мои документы\Куйбышев\Куйбышев.Ростверки и ФБ.dwg]</h1>
      <div className="flex gap-[2px]">
        <button aria-label="minimize" className={clsx(btn, 'bg-[#2f62e0]')}><svg viewBox="0 0 16 16" className="size-4"><path d="M4 11.5h5" stroke="#fff" strokeWidth="2.5" /></svg></button>
        <button aria-label="restore" className={clsx(btn, 'bg-[#2f62e0]')}><svg viewBox="0 0 16 16" className="size-4"><path d="M6 5V3.5h6.5v6H11M3.5 6.5h6v6h-6zM3 7.5h7" fill="none" stroke="#fff" strokeWidth="1.3" /></svg></button>
        <button aria-label="close" className={clsx(btn, 'bg-[#dd4f2b]')}><svg viewBox="0 0 16 16" className="size-4"><path d="M4 4l8 8M12 4l-8 8" stroke="#fff" strokeWidth="2" /></svg></button>
      </div>
    </header>
  )
}

function MenuBar() {
  return (
    <nav className="flex h-[18px] shrink-0 items-center pr-1 pl-[3px] font-[DejaVu_Sans_Condensed,sans-serif] text-[10px]">
      <Icon name="doc" className="mr-1 size-4" />
      <div className="flex flex-1 gap-2 leading-4">
        {MENU.map(m => <button key={m}>{m}</button>)}
      </div>
      <div className="flex gap-[2px]">
        {[['minimize', 'M4 11.5h5'], ['restore', 'M6 5V3.5h6.5v6H11M3.5 6.5h6v6h-6zM3 7h7'], ['close', 'M5 5l6 6M11 5l-6 6']].map(([n, d]) => (
          <button key={n} aria-label={`${n} drawing`} className="bg-[#f2f0e5]"><svg viewBox="0 0 16 16" className="size-[14px]"><path d={d} fill="none" stroke="#444" strokeWidth="1.5" /></svg></button>
        ))}
      </div>
    </nav>
  )
}

function Toolbars() {
  return (
    <div className="shrink-0 overflow-hidden border-b-2 border-[#8b887a]">
      <div className="flex h-6">
        <Bar className="w-[555px]"><Tools list="new open save | plot preview publish | cut copy paste brush blockedit | undo . redo . | pan zoomrt zoomwin> zoomprev | props center palettes sheetset markup calc | help" /></Bar>
        <Bar className="w-[350px]">
          <Tools list="textstyle" />
          <Combo label="Text style" value="GOST 2.304" className="w-[89px]" />
          <Tools list="| dimstyle" />
          <Combo label="Dimension style" value="PS_TICK" className="w-[89px]" />
          <Tools list="| tblstyle" />
          <Combo label="Table style" value="Standard" className="w-[89px]" />
        </Bar>
        <Bar className="w-[194px]"><Tools list="cleanup | ibeam ibeam2 | regen> | front back above under" /></Bar>
      </div>
      <div className="flex h-[25px]">
        <Bar className="w-[339px]">
          <Tools list="layers" />
          <Combo label="Layer" value="ROSTV" className="w-[264px]" pad="pl-[74px]">
            <Icon name="bulb" className="size-[14px]" />
            <Icon name="sun" className="size-[14px]" />
            <Icon name="sunvp" className="size-[14px]" />
            <Icon name="lock" className="size-[14px]" />
            <i className="size-[9px] border border-black bg-[#0000f0]" />
          </Combo>
          <Tools list="layercur layerprev" />
        </Bar>
        <Bar className="w-[520px]">
          <Combo label="Color" value="ПоСлою" className="ml-[2px] w-[132px]" pad="pl-4"><i className="size-[9px] border border-black bg-[#0000f0]" /></Combo>
          <Combo label="Linetype" value="ПоСлою" className="ml-[5px] w-[141px]" pad="pl-[60px]"><i className="h-px w-[52px] bg-black" /></Combo>
          <Combo label="Lineweight" value="ПоСлою" className="ml-[5px] w-[110px]" pad="pl-[38px]"><i className="h-1 w-[31px] bg-black" /></Combo>
          <Combo label="Plot style" value="ПоЦвету" disabled className="ml-[5px] w-[106px]" pad="pl-[7px]" />
        </Bar>
        <Bar className="w-[210px]">
          <Tools list="vpj1 vpj2 vpj3 vpj4 vpj5 |" />
          <Combo label="Viewport scale" value="" disabled className="w-[89px]" />
        </Bar>
      </div>
      <div className="flex h-6">
        <Bar className="w-[178px]"><Tools list="psprops pswand scale15> plumb> layersp> rectb> layersx> step>" /></Bar>
        <Bar className="w-[275px]"><Tools list="nodes> | pr1> beam> swap | shape> corner> grid isec> teapot> ladder> | cup> listl> tbl" /></Bar>
        <Bar className="w-[156px]"><Tools list="ques dimwin> lines> bplus> dimwin> green> redlist>" /></Bar>
        <Bar className="w-[493px]">
          <Tools list="dlin dalign darc dord | drad djog ddia dang | dquick dbase dcont | dlead tol cmark | dimed dimted dimup |" />
          <Combo label="Active dimension style" value="PS_TICK" className="w-[89px]" />
          <Tools list="dimstyle" />
        </Bar>
      </div>
      <div className="flex h-[25px]">
        <Bar className="w-[364px]"><Tools list="gridc> dimc> dimcur> level> leada> leadl> leadb> biga> rbreak> hsq> rtri> win1> win2> sview> painta> | form> hdoc>" /></Bar>
        <Bar className="w-[178px]"><Tools list="hatchb foursq circa boxarr crossb dotsd hdiag sheets" /></Bar>
        <Bar className="w-[203px]"><Tools list="dimc axes gridg | cr1 cr2 cr3 tee1 tee2 tee3" /></Bar>
        <Bar className="w-[76px]"><Tools list="rtri ruler redarr" /></Bar>
        <Bar className="w-[214px]"><Tools list="vp vps vpt vps | xtab xtabp | xlsin xlsout | xtabs" /></Bar>
      </div>
      <div className="flex h-6">
        <Bar className="w-[223px]"><Tools list="leada m1 m2 m3 m4 m5 m6 | a1 a2 a3" /></Bar>
        <Bar className="w-[76px]"><Tools list="leadb abar adota" /></Bar>
        <Bar className="w-[117px]"><Tools list="lv1 lv2 lv3 flag xdim" /></Bar>
        <Bar className="w-[116px]"><Tools list="lead2 circm brace para cube" /></Bar>
        <Bar className="w-[142px]"><Tools list="rbreak | s1 s2 s3 s4 book3" /></Bar>
        <Bar className="w-[443px]"><Tools list="rt1 rt2 rt3 | c1 c2 | c3 c4 | c5 c6 | c7 c8 | hand hand | sum sumd | book fx dia | exit" /></Bar>
      </div>
    </div>
  )
}

const STAFF = [
  [412, 'Рук.группы', 'Воробьева', '12.06'],
  [420, 'Вед.инжен.', 'Решетников', '12.06'],
  [428, 'Разработал', 'Никулина', '11.06'],
  [443, 'Нормоконтр.', 'Мишанова', '12.06'],
]

// A4 sheet with frame, stamp and the specification table
function Sheet({ x, y, no, mass, scale, page, rows }) {
  return (
    <g transform={`translate(${x} ${y})`} fontSize="6">
      <path d="M.5.5h320v452H.5zM31.5 8.5h282v437h-282z" fill="none" stroke="#222" />
      <path
        fill="none"
        stroke="#222"
        d="M0 216.5h31M8.5 231.5h23M8.5 254.5h23M8.5 285.5h23M0 315.5h31M8.5 216v99M16.5 216v99M23.5 216v99M13.5 315v130M21.5 315v130M13 353.5h18M13 406.5h18M13 445.5h18
        M31 361.5h282M31 368.5h100M31 376.5h100M31 384.5h282M31 391.5h100M237 391.5h76M31 399.5h100M31 406.5h100M31 414.5h100M237 414.5h76M31 422.5h282M31 430.5h100M31 437.5h100
        M46.5 361v38M62.5 361v84M77.5 361v38M92.5 361v84M115.5 361v84M131.5 361v84M237.5 384v61M259.5 384v30M282.5 384v30M268.5 414v8
        M168.5 285v46M184.5 285v46M274.5 285v46M291.5 285v46M168 285.5h145M168 307.5h145M168 320.5h145M168 331.5h145"
      />
      <g fontSize="4" fontWeight="700">
        <text x="173" y="299">Поз.</text><text x="203" y="299">НАИМЕНОВАНИЕ</text><text x="279" y="299">Кол.</text>
        <text x="302" y="294" textAnchor="middle">Масса</text><text x="302" y="299" textAnchor="middle">ед.,</text><text x="302" y="304" textAnchor="middle">кг.</text>
        {rows.map((r, i) => (
          <g key={i}>
            <text x="175" y={316 + i * 12} fontSize="5">{i + 1}</text>
            <text x="190" y={316 + i * 12}>{r[0]}</text>
            <text x="288" y={316 + i * 12} textAnchor="end">{r[1]}</text>
            <text x="309" y={316 + i * 12} textAnchor="end">{r[2]}</text>
          </g>
        ))}
        <text x="33" y="397">Изм.</text><text x="47" y="397">Кол.уч</text><text x="64" y="397">Лист</text><text x="78" y="397">N док</text><text x="94" y="397">Подпись</text><text x="118" y="397">Дата</text>
        <text x="240" y="390">Стадия</text><text x="265" y="390">Масса</text><text x="289" y="390">Масштаб</text>
        <text x="240" y="420">{page}</text><text x="271" y="420">Листов</text>
        <text x="270" y="405" textAnchor="middle">{mass}</text><text x="296" y="405" textAnchor="middle">{scale}</text>
        <text transform="translate(19 346) rotate(-90)">Взам.инв.N</text>
        <text transform="translate(19 398) rotate(-90)">Подпись и дата</text>
        <text transform="translate(19 441) rotate(-90)">Инв.N подл.</text>
      </g>
      {STAFF.map(s => (
        <g key={s[0]} fontSize="5" stroke="#000" strokeWidth=".2">
          <text x="33" y={s[0]}>{s[1]}</text><text x="63" y={s[0]}>{s[2]}</text><text x="117" y={s[0]}>{s[3]}</text>
        </g>
      ))}
      <text transform="translate(7 314) rotate(-90)" fontSize="5" fontWeight="700">СОГЛАСОВАНО</text>
      <text x="165" y="376" fontSize="9" fontFamily="DejaVu Sans, sans-serif">33 32В–912Б–КЖ.И</text>
      <g stroke="#000" strokeWidth=".3">
        <text x="184" y="406" textAnchor="middle">Сетка {no}</text>
        <text x="182" y="437" textAnchor="middle">Фундамент РМ6</text>
        <text x="220" y="451" textAnchor="middle">Формат А4</text>
      </g>
      <text x="244" y="407" fontSize="9" fontFamily="DejaVu Sans, sans-serif">Р</text>
      <text x="250" y="436" fontSize="10" fontFamily="DejaVu Sans, sans-serif">ОАО НИАП</text>
    </g>
  )
}

const Label = ({ x, y, up, children }) => (
  <text transform={up ? `translate(${x} ${y}) rotate(-90)` : `translate(${x} ${y})`} textAnchor="middle" fontSize="6" stroke="#000" strokeWidth=".3">{children}</text>
)

// chained dimension with oblique ticks at every stop
function Dim({ at, stops, up }) {
  const a = stops[0]
  const b = stops[stops.length - 1]
  return (
    <g stroke="#000">
      <path d={up ? `M${at} ${a - 2}V${b + 2}` : `M${a - 2} ${at}H${b + 2}`} />
      {stops.map(s => (
        <path key={s} d={up ? `M${at - 2} ${s + 2}l4-4M${at - 4} ${s}h8` : `M${s - 2} ${at + 2}l4-4M${s} ${at - 4}v6`} />
      ))}
    </g>
  )
}

function Drawing() {
  return (
    <svg viewBox="47 165 1060 647" className="block h-[647px] w-[1060px] max-w-none" fontFamily="Liberation Sans, sans-serif" fill="#000">
      <Sheet x={80} y={247} no="С1" mass="18,0" scale="1:50" page="Лист 54" rows={[['Ø8 АIII ГОСТ5781-82* L=2750', '28', '4,30'], ['', '', '']]} />
      <Sheet x={400} y={247} no="С2" mass="8,10" scale="1:50" page="Лист 55" rows={[['Ø8 АIII ГОСТ5781-82* L=1675', '4', '2,65'], ['Ø8 АI ГОСТ5781-82* L=800', '3', '0,18']]} />
      <Sheet x={742} y={245} no="С3" mass="4,3" scale="1:20" page="Лист 56" rows={[['Ø8 АIII ГОСТ5781-82* L=850', '8', '4,32'], ['', '', '']]} />

      {/* mesh С1 */}
      <g stroke="#000" strokeWidth="1.7">
        {Array.from({ length: 14 }, (_, i) => (
          <Fragment key={i}>
            <path d={`M200 ${Math.round(346 + i * 6.1)}H285`} />
            <path d={`M${Math.round(202 + i * 6.15)} 343.5V428`} />
          </Fragment>
        ))}
      </g>
      <path d="M200.5 338.5h7l1 6M189 416.5h8l4 3M200.5 436v22M284.5 436v22M301 343.5h16M301 427.5h16M292 343.5h3M292 427.5h3" stroke="#000" fill="none" />
      <Dim at={303.5} stops={[346, 426]} up /><Dim at={314.5} stops={[344, 427]} up />
      <Dim at={448.5} stops={[202, 282]} /><Dim at={456.5} stops={[200, 284]} />
      <Label x={204} y={337}>1</Label><Label x={192} y={415}>1</Label>
      <Label x={302} y={384} up>13 x 200 = 2600</Label><Label x={312} y={386} up>2750</Label>
      <Label x={302} y={340} up>75</Label><Label x={302} y={431} up>75</Label>
      <Label x={242} y={447}>13 x 200 = 2600</Label><Label x={242} y={455}>2750</Label>
      <Label x={196} y={447}>75</Label><Label x={288} y={447}>75</Label>

      {/* mesh С2 */}
      <path d="M539.5 335v103M551.5 335v103M563.5 335v103M575.5 335v103" stroke="#000" strokeWidth="1.8" />
      <path d="M537 426.5h50M537 432.5h50" stroke="#000" strokeWidth="1.6" />
      <path d="M537 402.5h50M545 329.5h5l2 6M527 422.5h7l4 4M537.5 446v20M587.5 446v20M596 335.5h20M593 402.5h10" stroke="#000" fill="none" />
      <Dim at={605.5} stops={[335, 402, 426, 432, 437]} up /><Dim at={615} stops={[335, 437]} up />
      <Dim at={456.5} stops={[540, 551, 564, 576, 587]} /><Dim at={462.5} stops={[537, 587]} />
      <Label x={547} y={328}>1</Label><Label x={529} y={421}>2</Label>
      <Label x={604} y={368} up>1100</Label><Label x={613} y={386} up>1675</Label><Label x={604} y={414} up>400</Label><Label x={604} y={429} up>100</Label><Label x={604} y={440} up>75</Label>
      <Label x={533} y={454}>25</Label><Label x={546} y={454}>200</Label><Label x={558} y={454}>200</Label><Label x={570} y={454}>200</Label><Label x={582} y={454}>175</Label><Label x={562} y={461}>800</Label>

      {/* mesh С3 */}
      <path d="M879.5 357v54M885.5 357v54M922.5 357v54M928.5 357v54M877 408.5h53" stroke="#000" strokeWidth="1.6" />
      <path d="M877 359.5h53M877 366h53M877 402.5h53M914 352.5h6l3 5M866 363.5h8l5 3M877.5 414v24M929.5 413v25M933 357.5h25M933 410.5h25" stroke="#000" fill="none" />
      <Dim at={948.5} stops={[358, 366, 402, 410]} up /><Dim at={956.5} stops={[358, 410]} up />
      <Dim at={428.5} stops={[878, 885, 922, 929]} /><Dim at={436.5} stops={[878, 929]} />
      <Label x={917} y={351}>1</Label><Label x={870} y={362}>1</Label>
      <Label x={946} y={352} up>25</Label><Label x={946} y={363} up>100</Label><Label x={946} y={384} up>600</Label><Label x={946} y={404} up>100</Label><Label x={946} y={415} up>25</Label><Label x={954} y={384} up>850</Label>
      <Label x={872} y={427}>25</Label><Label x={882} y={427}>100</Label><Label x={904} y={427}>600</Label><Label x={925} y={427}>100</Label><Label x={934} y={427}>25</Label><Label x={904} y={435}>850</Label>

      {/* UCS icon */}
      <path d="M60.5 786.5h12v12h-12zM66.5 786V730M73 792.5h55M61 730h11l-5-15.5zM64 730l3-15 2 15M127.5 787v11l16-5.5zM128 790l15 2.5-15 3" fill="none" stroke="#222" />
      <g fontFamily="DejaVu Sans, sans-serif" fontWeight="200" fontSize="21" fill="#333">
        <text x="155" y="800">X</text><text x="61" y="703">Y</text>
      </g>
      <path d="M889 767.5h57M917.5 740v56M908.5 757.5h20v20h-20z" fill="none" stroke="#222" />
    </svg>
  )
}

const SHEETS = ['Лист1', 'Лист2', 'Лист3', 'Лист4', 'Лист5', 'Лист6', 'А4', 'Лист7', 'Лист8']

function Slash() {
  return <svg viewBox="0 0 8 14" className="h-[14px] w-2"><path d="M1 14L7 0" stroke="#000" strokeWidth="1.2" /></svg>
}

function Tabs() {
  return (
    <div className="flex h-4 shrink-0 font-[DejaVu_Sans_Condensed,sans-serif] text-[10px] leading-[15px]">
      <div className="flex">
        {['M5 3v8M11 3L7 7l4 4z', 'M10 3L6 7l4 4z', 'M6 3l4 4-4 4z', 'M5 3l4 4-4 4zM11 3v8'].map((d, i) => (
          <button key={d} aria-label={['first', 'previous', 'next', 'last'][i]} className="w-4 border-r border-[#c5c2b0] bg-[#f4f2e8]"><svg viewBox="0 0 16 14" className="h-[14px] w-4"><path d={d} stroke="#000" strokeWidth="1.2" /></svg></button>
        ))}
      </div>
      <div className="flex flex-1 border-t border-[#3c3c3c]" role="tablist">
        <button role="tab" aria-selected="true" className="relative -mt-px ml-[2px] flex bg-white pl-[7px]">
          <svg viewBox="0 0 6 14" className="absolute left-0 h-[14px] w-[6px]"><path d="M0 0h0l5 14H0z" fill="#ece9d8" /><path d="M0 0l5 14" stroke="#000" /></svg>
          Модель
        </button>
        {SHEETS.map(s => (
          <button role="tab" key={s} className="flex"><Slash /><span className="border-b border-black px-px leading-[13px]">{s}</span></button>
        ))}
        <Slash />
      </div>
      <div className="flex w-[374px] items-center border-l-4 border-[#f8f7f0] bg-[#f5f3ec] pr-[17px] pl-px">
        <ScrollButton dir="left" className="h-[13px] w-[14px]" />
        <div className="flex flex-1 justify-end pr-[17px]"><Thumb /></div>
        <ScrollButton dir="right" className="h-[13px] w-[14px]" />
      </div>
    </div>
  )
}

function PropertiesPalette() {
  return (
    <aside className="absolute top-[19px] right-0 flex h-[458px] w-6 flex-col items-center border-r-4 border-b-2 border-[#77767c] bg-[#839be0] text-white">
      <button aria-label="close palette" className="mt-[2px]"><svg viewBox="0 0 14 14" className="size-[14px]"><path d="M2 2l10 10M12 2L2 12" stroke="#fff" strokeWidth="1.6" /></svg></button>
      <h2 className="mt-auto rotate-180 font-[DejaVu_Sans_Condensed,sans-serif] text-[11px] leading-4 font-bold [writing-mode:vertical-rl]">СВОЙСТВА</h2>
      <button aria-label="auto-hide" className="mt-[9px]"><svg viewBox="0 0 14 14" className="size-[14px]"><path d="M1.5 1.5h8v11h-8zM12.5 1v12" stroke="#fff" fill="#aebdee" strokeWidth="1.3" /><path d="M8 3v8L3 7z" fill="#3c58a8" /></svg></button>
      <button aria-label="palette options" className="mt-[6px] mb-1"><svg viewBox="0 0 14 14" className="size-[14px]"><path d="M1.5 1.5h11v11h-11z" stroke="#fff" fill="#dfe6fb" /><path d="M4 4h6M4 6.5h6M4 9h6" stroke="#3c58a8" /></svg></button>
    </aside>
  )
}

function Workspace() {
  return (
    <main className="flex min-h-0 flex-1">
      <div className="flex w-[22px] shrink-0 flex-col overflow-hidden border-r border-[#bcb9a6]">
        <VBar className="h-[381px]" list="line xline pline polygon rect arc circle cloud spline ellipse earc insert> block point hatch grad region table mtext" />
        <VBar className="h-[171px]" list="mtext stext etext ftext ttext sctext jtext sptext" />
        <VBar className="h-[112px]" list="dist area mass | list locate" />
      </div>
      <div className="flex w-[23px] shrink-0 flex-col overflow-hidden border-r border-[#bcb9a6]">
        <VBar className="h-[343px]" list="erase copyo mirror offset array move rotate scale stretch trim extend brkp brk join chamfer fillet explode" />
        <VBar className="h-[278px]" list="painta dcwin ibp vpp | ex1 ex2 ex3 | slab down> globe circsq mpen r12" />
        <VBar className="h-[43px]" list="biga apen" />
      </div>
      <div className="relative flex min-w-0 flex-1 flex-col border-l-2 border-[#9d9a8a]">
        <div className="flex min-h-0 flex-1 bg-white">
          <div className="min-w-0 flex-1 overflow-hidden"><Drawing /></div>
          <div className="flex w-[17px] shrink-0 flex-col items-center justify-between bg-[#f8f7f3] py-[2px]">
            <ScrollButton dir="up" className="h-[13px] w-[13px]" />
            <ScrollButton dir="down" className="h-[13px] w-[13px]" />
          </div>
        </div>
        <Tabs />
        <PropertiesPalette />
      </div>
    </main>
  )
}

function CommandLine() {
  return (
    <section className="shrink-0 border-t border-white font-['Liberation_Mono',monospace] text-[12px]">
      <div className="mt-1 h-px bg-black" />
      <div className="mt-1 flex pr-[7px] pb-px">
        <span className="my-[2px] mr-1 ml-[5px] flex">
          <i className="w-[3px] border-r border-l border-l-white border-r-[#b5b2a0]" />
          <i className="w-[3px] border-r border-l border-l-white border-r-[#b5b2a0]" />
        </span>
        <div className="min-w-0 flex-1 border-t-2 border-l border-[#55534b] bg-white">
          <div className="flex h-6 border-b border-[#a8a594]">
            <p className="flex-1 pt-px leading-[11px]">Базовая точка или [Перемещение] &lt;Перемещение&gt;: Вторая точка или &lt;считать<br />перемещением первую точку&gt;:</p>
            <div className="flex flex-col justify-between bg-[#f5f4ee] py-px">
              <ScrollButton dir="up" className="h-[10px] w-[13px]" />
              <ScrollButton dir="down" className="h-[10px] w-[13px]" />
            </div>
          </div>
          <div className="flex h-[15px] items-center">
            <label htmlFor="command">Команда:</label>
            <input id="command" className="min-w-0 flex-1 outline-none" />
            <div className="mr-3 flex w-[60px] items-center gap-[2px] bg-[#f5f4ee] pl-1">
              <ScrollButton dir="left" className="h-[13px] w-[13px]" />
              <Thumb />
              <ScrollButton dir="right" className="ml-auto h-[13px] w-[13px]" />
            </div>
          </div>
        </div>
      </div>
    </section>
  )
}

const MODES = [['ШАГ', 0], ['СЕТКА', 0], ['ОРТО', 1], ['ОТС-ПОЛЯР', 0], ['ПРИВЯЗКА', 1], ['ОТС-ОБЪЕКТ', 1], ['ДИН', 0], ['ВЕС', 0], ['МОДЕЛЬ', 1]]

function StatusBar() {
  return (
    <footer className="flex h-[20px] shrink-0 items-stretch border-t-2 border-b-2 border-t-[#c3c0ae] border-b-[#2c84ec] pl-[6px] font-['Liberation_Sans',sans-serif] text-[10px] leading-4">
      <span className="w-[41px] pt-px">М 1: 200</span>
      <span className="w-[212px] border-x border-[#c5c2b0] pt-px pl-[2px]">1440959, -246792, 0</span>
      <div className="flex pl-[3px]">
        {MODES.map(([m, on]) => (
          <button key={m} aria-pressed={!!on} className={clsx('border-t border-l px-[2px] leading-4', on ? 'border-[#3c3c3c] bg-[#f4f2e8]' : 'border-r border-transparent border-r-[#c5c2b0]')}>{m}</button>
        ))}
      </div>
      <span className="ml-auto w-1 border-x border-[#c5c2b0]" />
      <span className="w-[60px] border-r border-[#c5c2b0] pl-3">М1:100</span>
      <span className="flex items-center gap-[2px] px-1"><Icon name="trusted" /><Icon name="padlock" className="size-[15px]" /></span>
      <button aria-label="tray menu" className="flex w-[10px] items-end justify-center pb-[3px]"><i className="border-x-[3px] border-t-4 border-x-transparent border-t-black" /></button>
    </footer>
  )
}

export default function App() {
  return (
    <div className="flex h-screen min-h-[600px] flex-col overflow-hidden bg-[#ece9d8] font-['Liberation_Sans',sans-serif] text-black">
      <TitleBar />
      <MenuBar />
      <Toolbars />
      <Workspace />
      <CommandLine />
      <StatusBar />
    </div>
  )
}
